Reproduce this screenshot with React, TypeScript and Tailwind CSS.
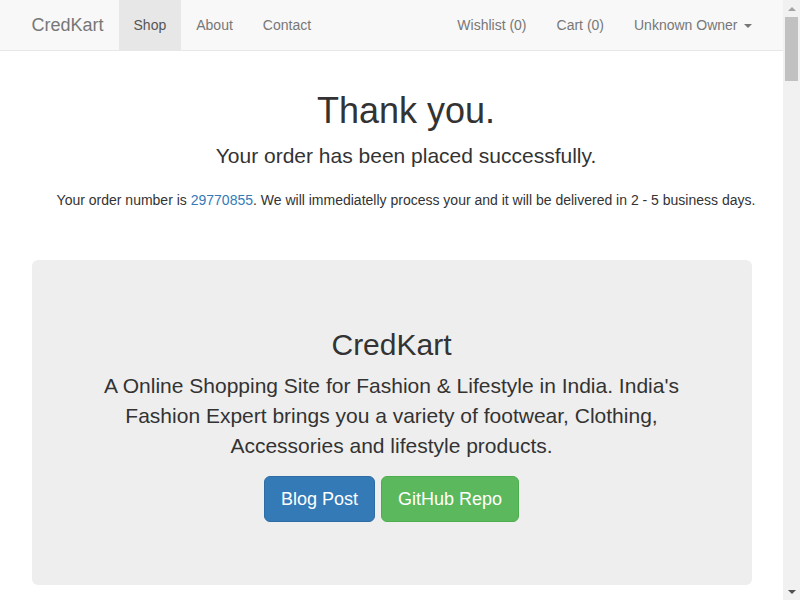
import { useState } from "react";

const font = "font-['Liberation_Sans','Helvetica_Neue',Arial,sans-serif]";

function NavLink({ label, active }: { label: string; active?: boolean }) {
  return (
    <a
      href="#"
      className={
        "block px-[15px] py-[15px] text-[14px] leading-[20px] " +
        (active ? "bg-[#e7e7e7] text-[#555]" : "text-[#777] hover:text-[#333]")
      }
    >
      {label}
    </a>
  );
}

function Scrollbar() {
  return (
    <aside className="sticky top-0 flex h-[600px] w-[17px] shrink-0 flex-col bg-[#f1f1f1]">
      <div className="flex h-[17px] items-center justify-center">
        <span className="h-0 w-0 border-x-[4px] border-b-[4px] border-x-transparent border-b-[#a3a3a3]" />
      </div>
      <div className="flex-1">
        <div className="mx-[2px] h-[64px] bg-[#c1c1c1]" />
      </div>
      <div className="flex h-[17px] items-center justify-center">
        <span className="h-0 w-0 border-x-[4px] border-t-[4px] border-x-transparent border-t-[#505050]" />
      </div>
    </aside>
  );
}

export default function App() {
  const [open, setOpen] = useState(false);

  return (
    <div className={`${font} flex bg-white text-[14px] leading-[20px] text-[#333]`}>
      <main className="min-h-[5300px] w-[783px] shrink-0">
        <nav className="h-[51px] border-b border-[#e7e7e7] bg-[#f8f8f8]">
          <div className="mx-auto flex w-[750px] px-[15px]">
            <a href="#" className="-ml-[15px] block h-[50px] px-[15px] py-[15px] text-[18px] leading-[20px] text-[#777]">
              CredKart
            </a>
            <ul className="flex">
              <li><NavLink label="Shop" active /></li>
              <li><NavLink label="About" /></li>
              <li><NavLink label="Contact" /></li>
            </ul>
            <ul className="-mr-[15px] ml-auto flex">
              <li><NavLink label="Wishlist (0)" /></li>
              <li><NavLink label="Cart (0)" /></li>
              <li>
                <button
                  onClick={() => setOpen(!open)}
                  className="flex items-center px-[15px] py-[15px] text-[14px] leading-[20px] text-[#777]"
                >
                  Unknown Owner
                  <span className="ml-[6px] mt-[2px] h-0 w-0 border-x-[4px] border-t-[4px] border-x-transparent border-t-[#777]" />
                </button>
              </li>
            </ul>
          </div>
        </nav>

        <div className="pt-[40px] pl-[29px] text-center">
          <h1 className="mb-[10px] text-[36px] leading-[1.1] font-normal">Thank you.</h1>
          <h4 className="mt-[13px] mb-[10px] text-[21px] leading-[1.1] font-normal">Your order has been placed successfully.</h4>
          <p className="mt-[23px]">
            Your order number is <a href="#" className="text-[#337ab7]">29770855</a>. We will immediatelly process your and it will be delivered in 2 - 5 business days.
          </p>
        </div>

        <div className="mx-auto mt-[50px] w-[750px] px-[15px]">
          <div className="rounded-[6px] bg-[#eee] px-[60px] pt-[48px] pb-[48px] text-center">
            <h2 className="mt-[20px] mb-[10px] text-[30px] leading-[1.1] font-normal">CredKart</h2>
            <p className="mb-[15px] text-[21px] leading-[30px]">
              A Online Shopping Site for Fashion &amp; Lifestyle in India. India's Fashion Expert brings you a variety of footwear, Clothing, Accessories and lifestyle products.
            </p>
            <p className="mb-[15px] flex justify-center gap-[6px]">
              <a href="#" className="rounded-[6px] border border-[#2e6da4] bg-[#337ab7] px-[16px] py-[10px] text-[18px] leading-[24px] text-white">
                Blog Post
              </a>
              <a href="#" className="rounded-[6px] border border-[#4cae4c] bg-[#5cb85c] px-[16px] py-[10px] text-[18px] leading-[24px] text-white">
                GitHub Repo
              </a>
            </p>
          </div>
        </div>
      </main>
      <Scrollbar />
    </div>
  );
}
